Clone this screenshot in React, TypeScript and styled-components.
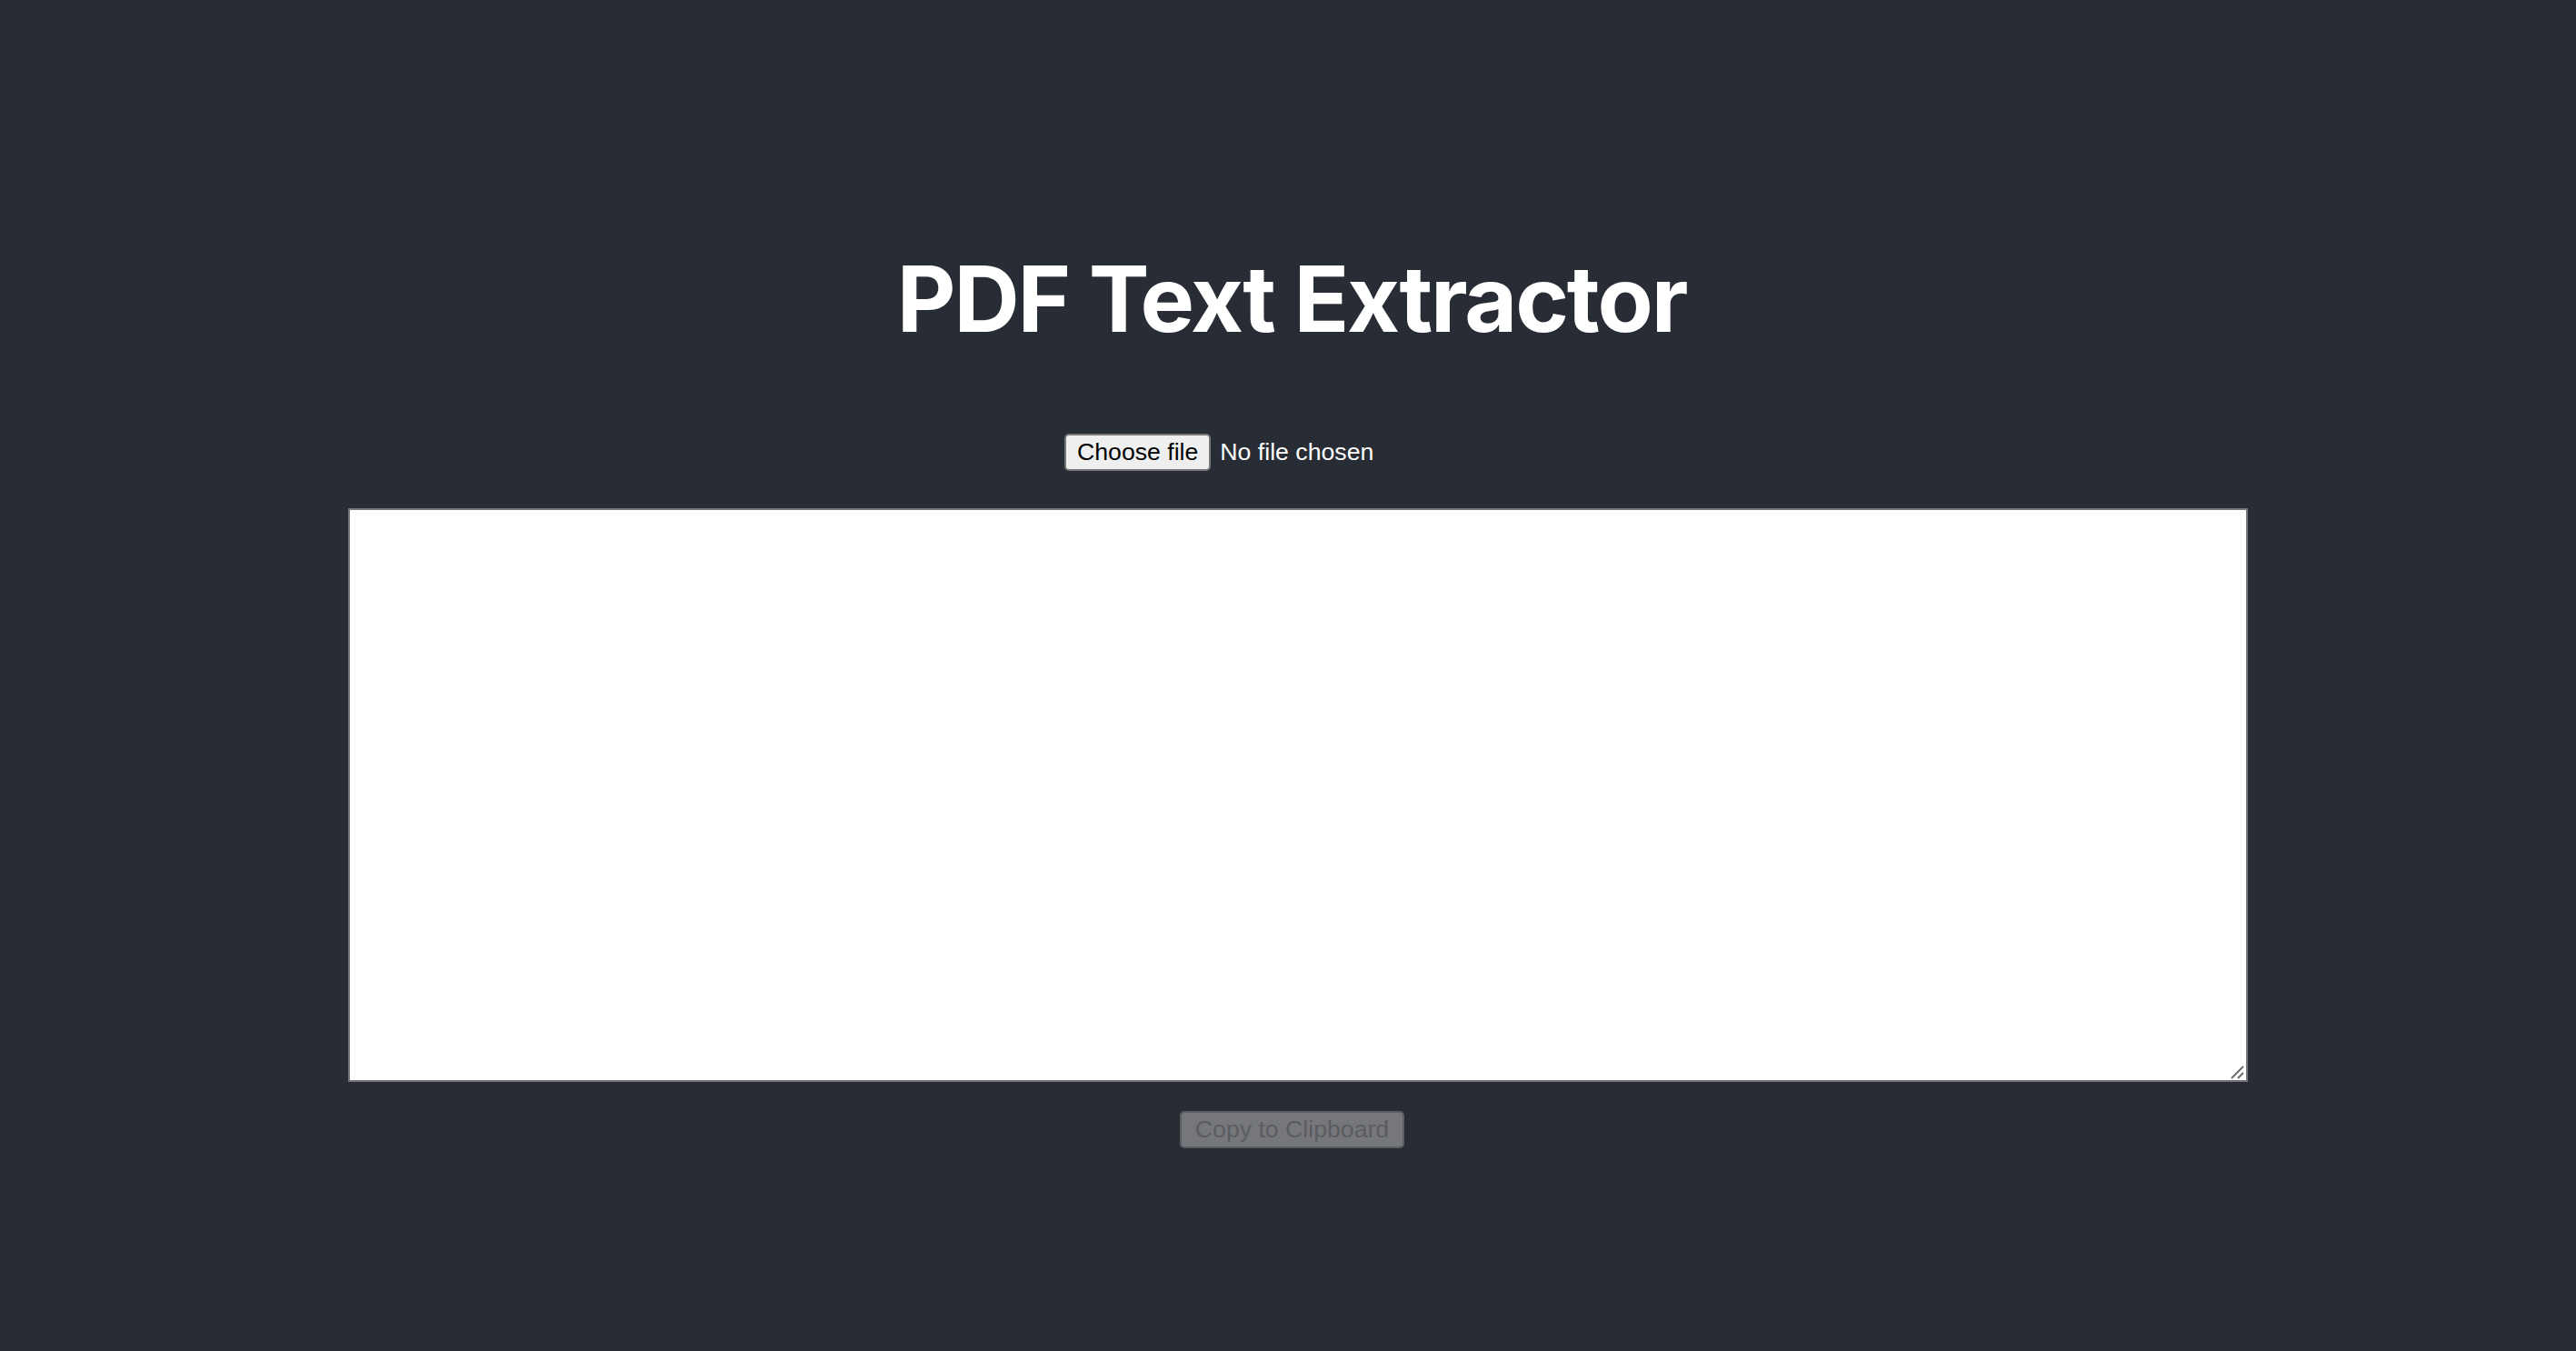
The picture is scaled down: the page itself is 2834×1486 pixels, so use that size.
import React, { useState } from 'react'
import styled, { createGlobalStyle } from 'styled-components'

const GlobalStyle = createGlobalStyle`
  html, body {
    margin: 0;
    padding: 0;
    background: #282c34;
  }
  body {
    font-family: "Liberation Sans", Arial, sans-serif;
    color: #ffffff;
  }
`

const Page = styled.div`
  min-height: 1486px;
  box-sizing: border-box;
  padding-top: 279px;
  display: flex;
  flex-direction: column;
  align-items: center;
`

const Title = styled.h1`
  margin: 0 0 0 8px;
  font-family: Inter, "Liberation Sans", sans-serif;
  font-weight: 700;
  font-size: 100px;
  line-height: 100px;
  letter-spacing: -2.1px;
  color: #ffffff;
`

const FileRow = styled.label`
  margin-top: 98px;
  width: 492px;
  display: flex;
  align-items: center;
  font-size: 26.67px;
  cursor: default;

  input {
    display: none;
  }
`

const PickButton = styled.span`
  box-sizing: border-box;
  height: 41px;
  padding: 0 12px;
  display: inline-flex;
  align-items: center;
  background: #efefef;
  color: #000000;
  border: 2px solid #767676;
  border-radius: 5px;
  font-size: 26.67px;
  margin-right: 10px;
`

const FileName = styled.span`
  color: #ffffff;
`

const TextBox = styled.div`
  position: relative;
  margin-top: 41px;
  margin-left: 22px;
  width: 2090px;
  height: 631px;
`

const Area = styled.textarea`
  box-sizing: border-box;
  width: 100%;
  height: 100%;
  display: block;
  border: 2px solid #767676;
  border-radius: 0;
  background: #ffffff;
  resize: none;
  outline: none;
  padding: 4px;
  font-family: "Liberation Mono", monospace;
  font-size: 26px;
`

const Grip = styled.svg`
  position: absolute;
  right: 4px;
  bottom: 3px;
  width: 16px;
  height: 16px;
  pointer-events: none;
`

const CopyButton = styled.button`
  box-sizing: border-box;
  margin-top: 32px;
  margin-left: 9px;
  height: 41px;
  padding: 0 15px;
  background: #76777b;
  color: #5a5c61;
  border: 2px solid #5c5e64;
  border-radius: 5px;
  font-family: "Liberation Sans", Arial, sans-serif;
  font-size: 26.67px;
`

export default function App() {
  const [text, setText] = useState('')
  const [fileName, setFileName] = useState('')

  return (
    <>
      <GlobalStyle />
      <Page>
        <Title>PDF Text Extractor</Title>
        <FileRow>
          <input
            type="file"
            accept="application/pdf"
            onChange={e => setFileName(e.target.files?.[0]?.name || '')}
          />
          <PickButton>Choose file</PickButton>
          <FileName>{fileName || 'No file chosen'}</FileName>
        </FileRow>
        <TextBox>
          <Area value={text} onChange={e => setText(e.target.value)} />
          <Grip viewBox="0 0 16 16">
            <line x1="2" y1="15" x2="15" y2="2" stroke="#6b6b6b" strokeWidth="2" />
            <line x1="9" y1="15" x2="15" y2="9" stroke="#6b6b6b" strokeWidth="2" />
          </Grip>
        </TextBox>
        <CopyButton disabled={!text}>Copy to Clipboard</CopyButton>
      </Page>
    </>
  )
}
